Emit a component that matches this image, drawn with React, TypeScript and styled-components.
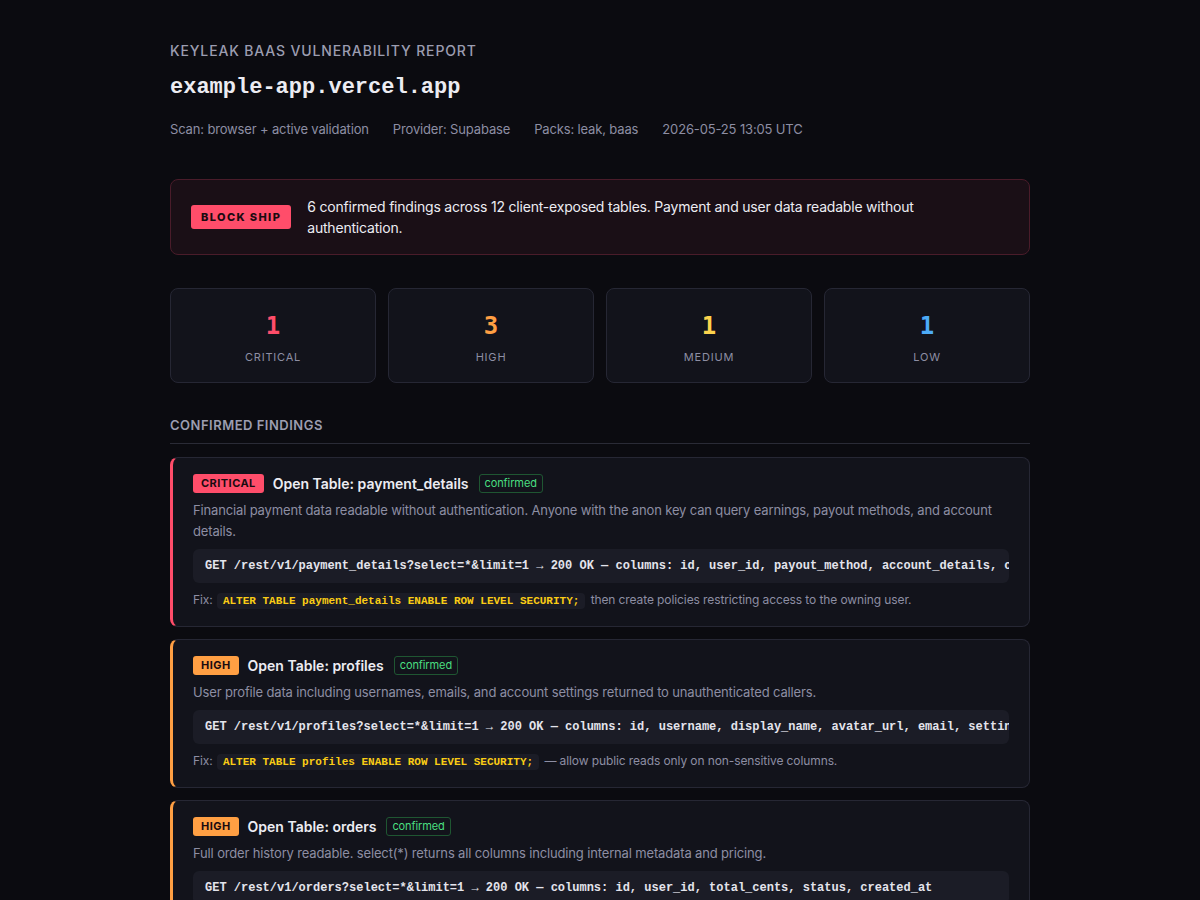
import React from 'react';
import styled, { createGlobalStyle } from 'styled-components';

const SANS = 'Inter, "Noto Sans", "Liberation Sans", sans-serif';
const MONO = '"Liberation Mono", "Courier New", monospace';
const NUM_MONO = '"DejaVu Sans Mono", "Liberation Mono", monospace';

const severityColors: Record<string, string> = {
  critical: '#ff4d6a',
  high: '#ff9f43',
  medium: '#fcd34d',
  low: '#4dabf7',
};

type Severity = 'critical' | 'high' | 'medium' | 'low';

const GlobalStyle = createGlobalStyle`
  html, body {
    margin: 0;
    padding: 0;
    background: #0b0b10;
    color: #e4e4ec;
    font-family: ${SANS};
  }
  * { box-sizing: border-box; }
`;

const Page = styled.div`
  max-width: 860px;
  margin: 0 auto;
  padding: 41px 0 60px;
`;

const Header = styled.header`
  margin-bottom: 41px;
`;

const Eyebrow = styled.div`
  font-size: 14px;
  line-height: 20px;
  font-weight: 500;
  letter-spacing: 0.85px;
  text-transform: uppercase;
  color: #9c9db0;
`;

const Host = styled.h1`
  margin: 13px 0 0;
  font-family: ${MONO};
  font-size: 22px;
  line-height: 28px;
  font-weight: 700;
  color: #ececf2;
`;

const Meta = styled.div`
  display: flex;
  gap: 24px;
  margin-top: 18px;
  font-size: 13px;
  line-height: 18px;
  letter-spacing: -0.15px;
  color: #8d8ea3;
`;

const Banner = styled.div`
  display: flex;
  align-items: flex-start;
  gap: 16px;
  padding: 16px 20px;
  background: #1a0f16;
  border: 1px solid #4a1c2a;
  border-radius: 8px;
`;

const BlockBadge = styled.span`
  flex: none;
  margin-top: 9px;
  padding: 0 10px;
  height: 24px;
  display: inline-flex;
  align-items: center;
  background: #ff4d6a;
  color: #1a0b10;
  border-radius: 3px;
  font-size: 11px;
  font-weight: 800;
  letter-spacing: 1.4px;
`;

const BannerText = styled.p`
  margin: 0;
  font-size: 14px;
  line-height: 21px;
  letter-spacing: -0.2px;
  color: #ececf2;
`;

const Stats = styled.div`
  display: grid;
  grid-template-columns: repeat(4, 1fr);
  gap: 12px;
  margin-top: 33px;
`;

const StatCard = styled.div`
  display: flex;
  flex-direction: column;
  align-items: center;
  padding: 22px 16px 17px;
  background: #12131b;
  border: 1px solid #262734;
  border-radius: 8px;
`;

const StatNumber = styled.div<{ $color: string }>`
  font-family: ${NUM_MONO};
  font-size: 24px;
  line-height: 30px;
  font-weight: 700;
  color: ${(p) => p.$color};
`;

const StatLabel = styled.div`
  margin-top: 8px;
  font-size: 11px;
  line-height: 16px;
  letter-spacing: 0.8px;
  text-transform: uppercase;
  color: #8d8ea3;
`;

const SectionTitle = styled.h2`
  margin: 33px 0 13px;
  padding-bottom: 9px;
  border-bottom: 1px solid #2a2b36;
  font-size: 13px;
  line-height: 18px;
  font-weight: 600;
  letter-spacing: 0.5px;
  text-transform: uppercase;
  color: #9c9db0;
`;

const FindingList = styled.div`
  display: flex;
  flex-direction: column;
  gap: 12px;
`;

const FindingCard = styled.article<{ $color: string }>`
  padding: 16px 20px 15px;
  background: #12131b;
  border: 1px solid #262734;
  border-left: 3px solid ${(p) => p.$color};
  border-radius: 8px;
  min-width: 0;
`;

const FindingHead = styled.div`
  display: flex;
  align-items: center;
  gap: 9px;
`;

const SeverityBadge = styled.span<{ $color: string }>`
  padding: 2px 8px;
  font-size: 11px;
  line-height: 15px;
  font-weight: 700;
  letter-spacing: 0.45px;
  text-transform: uppercase;
  color: #1a0b10;
  background: ${(p) => p.$color};
  border-radius: 3px;
`;

const FindingTitle = styled.h3`
  margin: 0;
  font-size: 14px;
  line-height: 19px;
  font-weight: 600;
  color: #ececf2;
`;

const StatusTag = styled.span`
  margin-left: 1px;
  padding: 1px 5px;
  font-size: 11px;
  line-height: 15px;
  letter-spacing: -0.1px;
  color: #4ade80;
  border: 1px solid #1f5632;
  border-radius: 3px;
`;

const Description = styled.p`
  margin: 7px 0 0;
  font-size: 13px;
  line-height: 21px;
  letter-spacing: -0.15px;
  color: #8d8ea3;
`;

const Evidence = styled.pre`
  margin: 7px 0 0;
  padding: 8px 12px;
  background: #1b1c26;
  border-radius: 6px;
  font-family: ${MONO};
  font-size: 12px;
  line-height: 18px;
  font-weight: 700;
  color: #e4e4ec;
  white-space: pre;
  overflow: hidden;
`;

const Fix = styled.p`
  margin: 7px 0 0;
  font-size: 12px;
  line-height: 19px;
  letter-spacing: -0.1px;
  color: #8d8ea3;
`;

const FixCode = styled.code`
  margin: 0 2px 0 1px;
  padding: 2px 6px;
  background: #1b1c26;
  border-radius: 4px;
  font-family: ${MONO};
  font-size: 11px;
  font-weight: 700;
  letter-spacing: 0;
  color: #facc15;
`;

type Finding = {
  severity: Severity;
  title: string;
  description: string;
  evidence: string;
  fixCode: string;
  fixText: string;
};

const findings: Finding[] = [
  {
    severity: 'critical',
    title: 'Open Table: payment_details',
    description:
      'Financial payment data readable without authentication. Anyone with the anon key can query earnings, payout methods, and account details.',
    evidence:
      'GET /rest/v1/payment_details?select=*&limit=1 → 200 OK — columns: id, user_id, payout_method, account_details, created_at',
    fixCode: 'ALTER TABLE payment_details ENABLE ROW LEVEL SECURITY;',
    fixText: 'then create policies restricting access to the owning user.',
  },
  {
    severity: 'high',
    title: 'Open Table: profiles',
    description:
      'User profile data including usernames, emails, and account settings returned to unauthenticated callers.',
    evidence:
      'GET /rest/v1/profiles?select=*&limit=1 → 200 OK — columns: id, username, display_name, avatar_url, email, settings',
    fixCode: 'ALTER TABLE profiles ENABLE ROW LEVEL SECURITY;',
    fixText: '— allow public reads only on non-sensitive columns.',
  },
  {
    severity: 'high',
    title: 'Open Table: orders',
    description:
      'Full order history readable. select(*) returns all columns including internal metadata and pricing.',
    evidence:
      'GET /rest/v1/orders?select=*&limit=1 → 200 OK — columns: id, user_id, total_cents, status, created_at',
    fixCode: 'ALTER TABLE orders ENABLE ROW LEVEL SECURITY;',
    fixText: 'then scope reads to auth.uid() = user_id.',
  },
  {
    severity: 'high',
    title: 'Writable Table: messages',
    description:
      'Anonymous INSERT accepted on messages. Attackers can write arbitrary rows as any user.',
    evidence:
      'POST /rest/v1/messages → 201 Created — row inserted with user_id from request body',
    fixCode: 'CREATE POLICY ... WITH CHECK (auth.uid() = user_id);',
    fixText: 'to bind writes to the caller.',
  },
  {
    severity: 'medium',
    title: 'Public Storage Bucket: uploads',
    description: 'Storage bucket listing is enabled for the anon role.',
    evidence: 'POST /storage/v1/object/list/uploads → 200 OK — 48 objects listed',
    fixCode: "UPDATE storage.buckets SET public = false WHERE id = 'uploads';",
    fixText: 'and serve files through signed URLs.',
  },
  {
    severity: 'low',
    title: 'Anon Key in Client Bundle',
    description: 'Supabase anon key embedded in /_next/static chunks. Expected, but relies on RLS.',
    evidence: 'eyJhbGciOiJIUzI1NiIsInR5cCI6IkpXVCJ9… found in main-8f2c1a.js',
    fixCode: 'ENABLE ROW LEVEL SECURITY',
    fixText: 'on every exposed table.',
  },
];

const counts: { severity: Severity; value: number }[] = [
  { severity: 'critical', value: 1 },
  { severity: 'high', value: 3 },
  { severity: 'medium', value: 1 },
  { severity: 'low', value: 1 },
];

const App = () => {
  return (
    <>
      <GlobalStyle />
      <Page>
        <Header>
          <Eyebrow>Keyleak BaaS Vulnerability Report</Eyebrow>
          <Host>example-app.vercel.app</Host>
          <Meta>
            <span>Scan: browser + active validation</span>
            <span>Provider: Supabase</span>
            <span>Packs: leak, baas</span>
            <span>2026-05-25 13:05 UTC</span>
          </Meta>
        </Header>

        <Banner>
          <BlockBadge>BLOCK SHIP</BlockBadge>
          <BannerText>
            6 confirmed findings across 12 client-exposed tables. Payment and user data readable
            without authentication.
          </BannerText>
        </Banner>

        <Stats>
          {counts.map((c) => (
            <StatCard key={c.severity}>
              <StatNumber $color={severityColors[c.severity]}>{c.value}</StatNumber>
              <StatLabel>{c.severity}</StatLabel>
            </StatCard>
          ))}
        </Stats>

        <SectionTitle>Confirmed Findings</SectionTitle>
        <FindingList>
          {findings.map((f) => (
            <FindingCard key={f.title} $color={severityColors[f.severity]}>
              <FindingHead>
                <SeverityBadge $color={severityColors[f.severity]}>{f.severity}</SeverityBadge>
                <FindingTitle>{f.title}</FindingTitle>
                <StatusTag>confirmed</StatusTag>
              </FindingHead>
              <Description>{f.description}</Description>
              <Evidence>{f.evidence}</Evidence>
              <Fix>
                Fix: <FixCode>{f.fixCode}</FixCode> {f.fixText}
              </Fix>
            </FindingCard>
          ))}
        </FindingList>
      </Page>
    </>
  );
};

export default App;
